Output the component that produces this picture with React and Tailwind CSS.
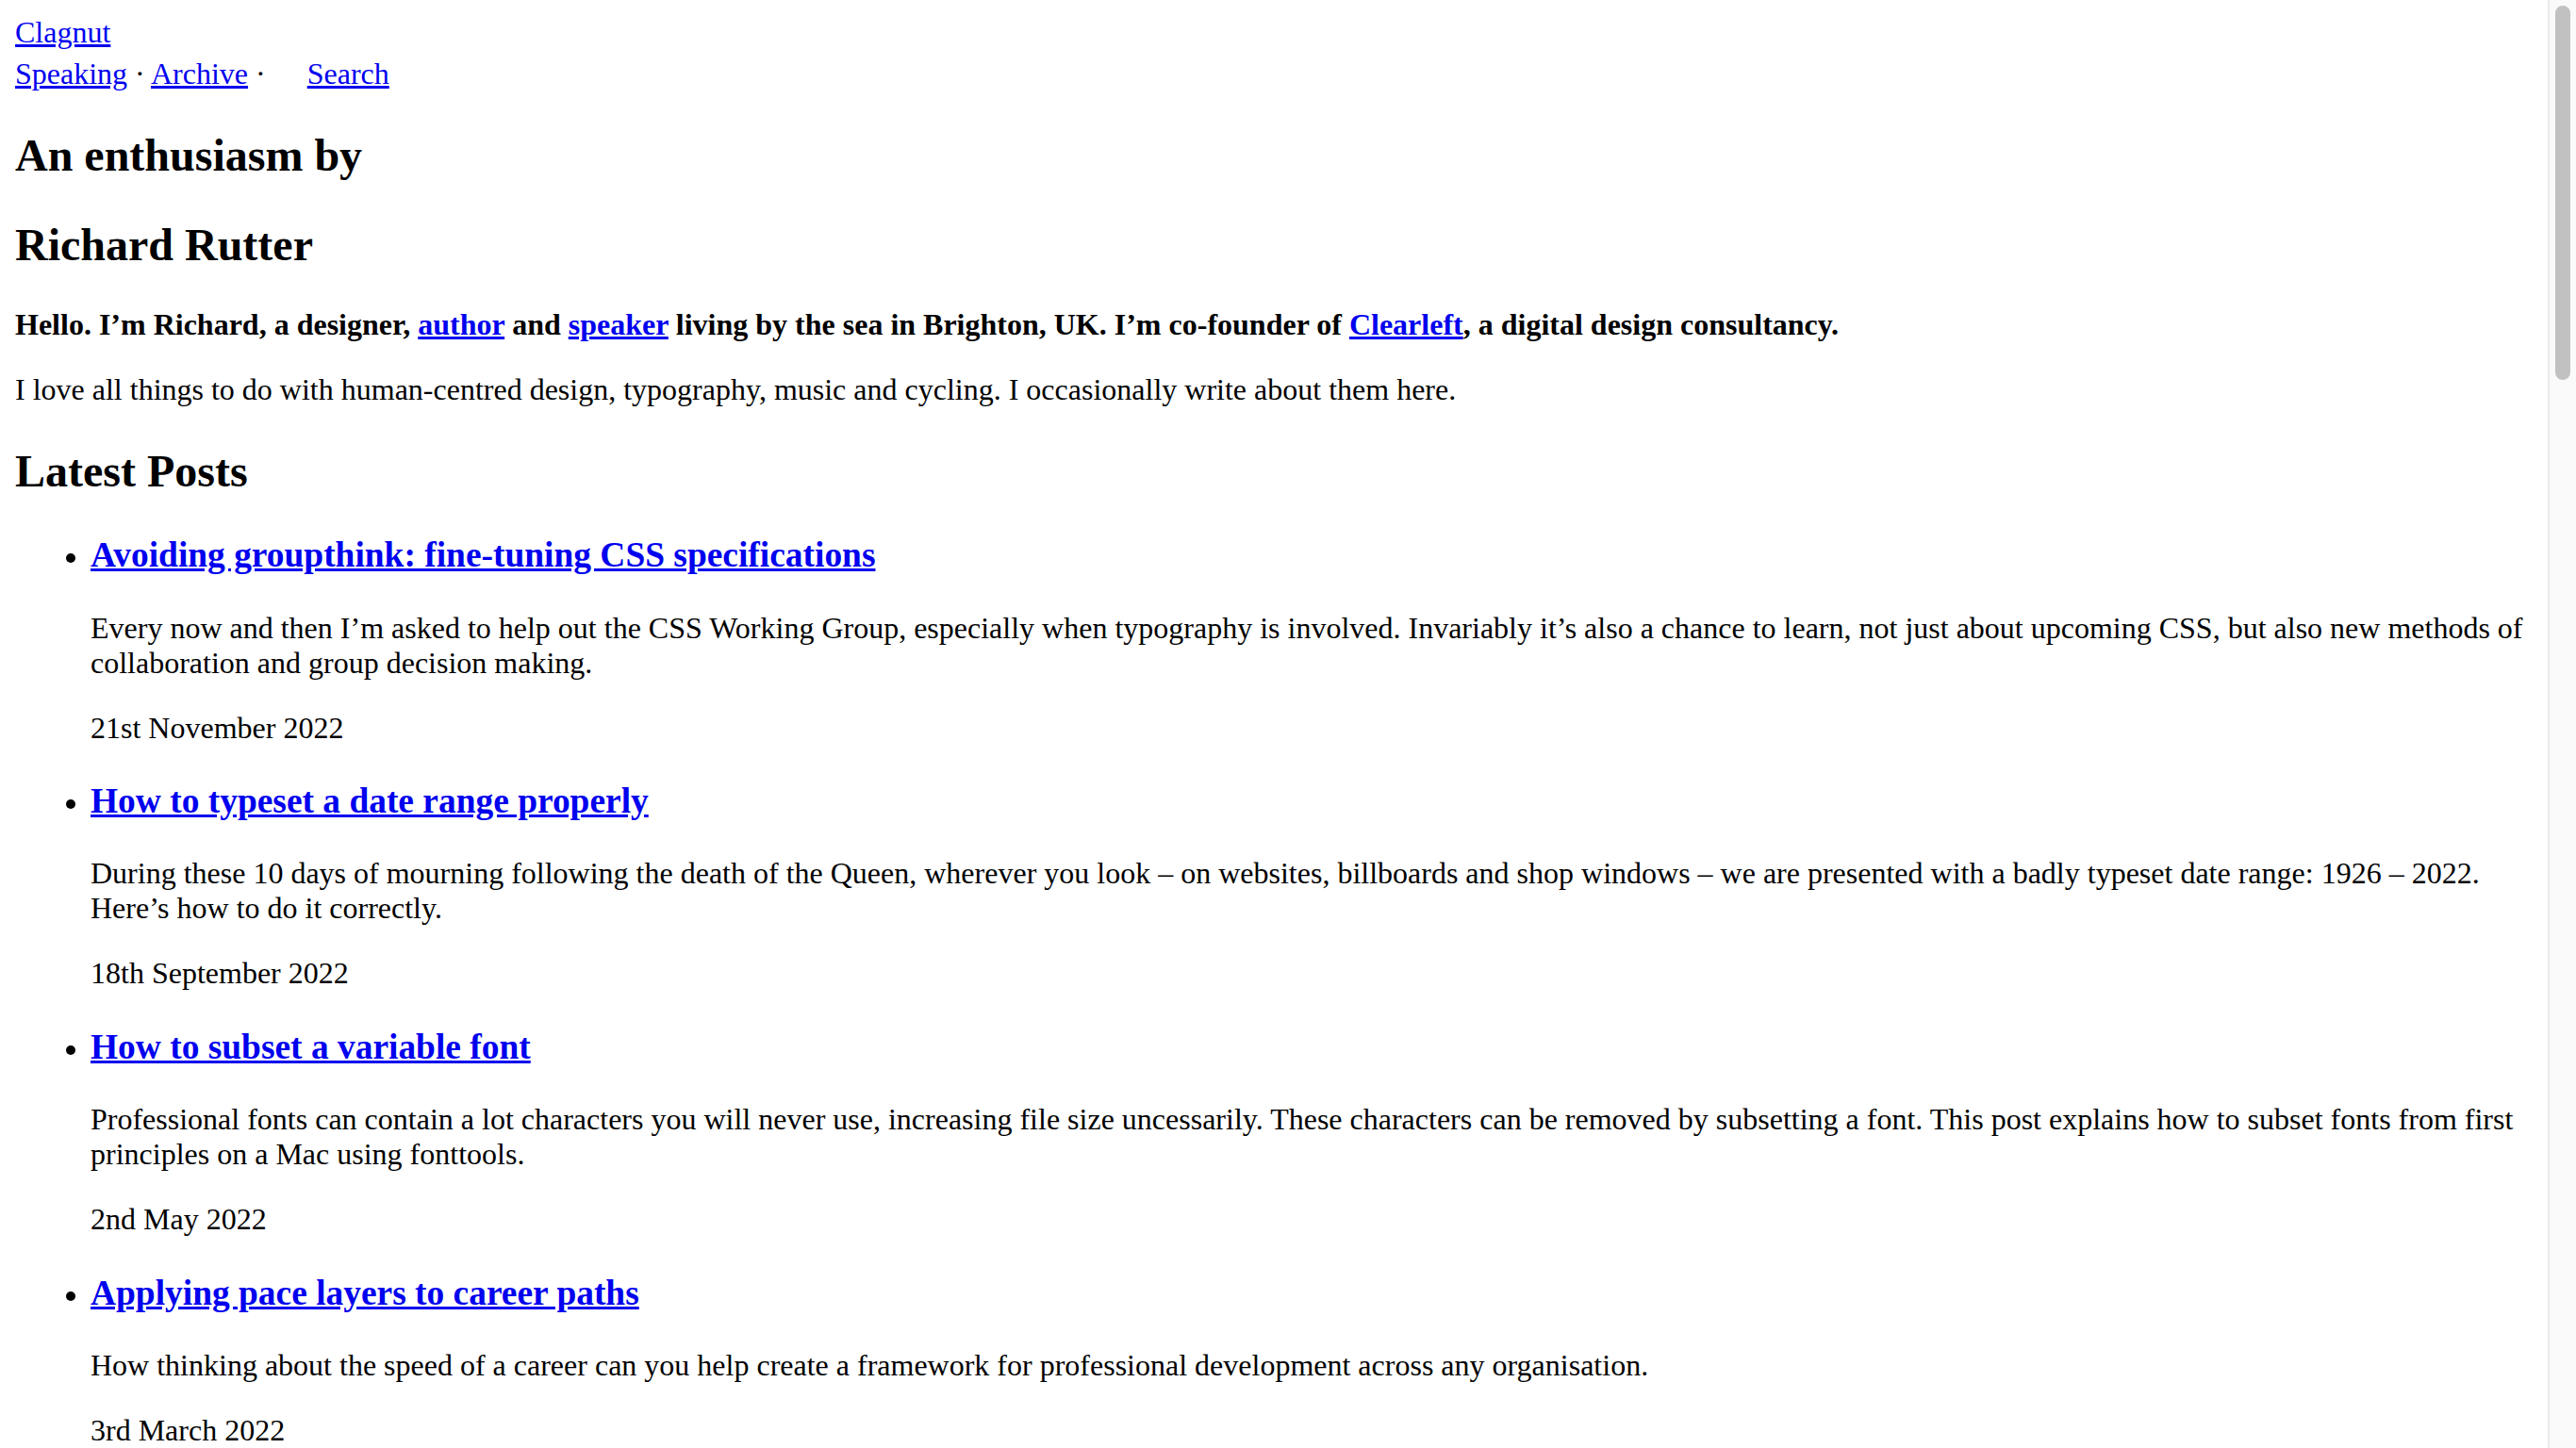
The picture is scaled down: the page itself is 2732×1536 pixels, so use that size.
const posts = [
  {
    title: 'Avoiding groupthink: fine-tuning CSS specifications',
    summary:
      'Every now and then I’m asked to help out the CSS Working Group, especially when typography is involved. Invariably it’s also a chance to learn, not just about upcoming CSS, but also new methods of collaboration and group decision making.',
    date: '21st November 2022',
  },
  {
    title: 'How to typeset a date range properly',
    summary:
      'During these 10 days of mourning following the death of the Queen, wherever you look – on websites, billboards and shop windows – we are presented with a badly typeset date range: 1926 – 2022. Here’s how to do it correctly.',
    date: '18th September 2022',
  },
  {
    title: 'How to subset a variable font',
    summary:
      'Professional fonts can contain a lot characters you will never use, increasing file size uncessarily. These characters can be removed by subsetting a font. This post explains how to subset fonts from first principles on a Mac using fonttools.',
    date: '2nd May 2022',
  },
  {
    title: 'Applying pace layers to career paths',
    summary:
      'How thinking about the speed of a career can you help create a framework for professional development across any organisation.',
    date: '3rd March 2022',
  },
];

const link = 'text-[#0000ee] underline';

export default function App() {
  return (
    <div className="flex h-screen w-full overflow-hidden bg-white text-black font-['Liberation_Serif','Times_New_Roman',serif] text-[32px] leading-[normal]">
      <div className="min-w-0 flex-1 p-4">
        <div>
          <a href="#" className={link}>Clagnut</a>
        </div>
        <div>
          <a href="#" className={link}>Speaking</a> · <a href="#" className={link}>Archive</a> ·{' '}
          <span className="inline-block h-[36px] w-[28px]"></span>{' '}
          <a href="#" className={link}>Search</a>
        </div>

        <h2 className="my-[39.84px] text-[48px] font-bold">An enthusiasm by</h2>
        <h2 className="my-[39.84px] text-[48px] font-bold">Richard Rutter</h2>

        <p className="my-8 font-bold">
          Hello. I’m Richard, a designer, <a href="#" className={link}>author</a> and{' '}
          <a href="#" className={link}>speaker</a> living by the sea in Brighton, UK. I’m co-founder of{' '}
          <a href="#" className={link}>Clearleft</a>, a digital design consultancy.
        </p>
        <p className="my-8">
          I love all things to do with human-centred design, typography, music and cycling. I occasionally write about them here.
        </p>

        <h2 className="my-[39.84px] text-[48px] font-bold">Latest Posts</h2>
        <ul className="my-8 list-disc pl-20">
          {posts.map((post) => (
            <li key={post.title}>
              <h3 className="my-[37.44px] text-[37.44px] font-bold">
                <a href="#" className={link}>{post.title}</a>
              </h3>
              <p className="my-8">{post.summary}</p>
              <p className="my-8">{post.date}</p>
            </li>
          ))}
        </ul>
      </div>

      {/* scrollbar */}
      <div className="w-[30px] shrink-0 border-l-2 border-[#ececec] bg-[#fafafa] pl-[6px] pt-[6px]">
        <div className="h-[397px] w-4 rounded-full bg-[#c1c1c1]"></div>
      </div>
    </div>
  );
}
